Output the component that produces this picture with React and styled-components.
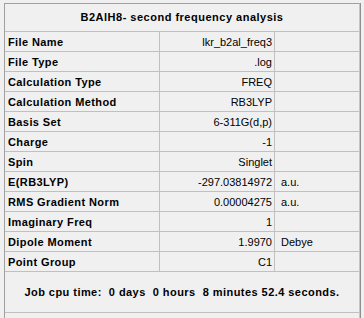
import React from 'react';
import styled, { createGlobalStyle } from 'styled-components';

const GlobalStyle = createGlobalStyle`
	html, body {
		margin: 0;
		padding: 0;
		background: #f0f0f0;
		overflow: hidden;
	}
	body {
		font-family: "Liberation Sans", Arial, sans-serif;
		font-size: 11px;
		color: #000;
	}
`;

const Page = styled.div`
	padding: 3px 0 0 4px;
	height: 318px;
	box-sizing: border-box;
	overflow: hidden;
`;

const Grid = styled.div`
	width: 354px;
	border-left: 1px solid #a0a0a0;
	border-top: 1px solid #a0a0a0;
	border-right: 1px solid #c4c4c4;
	box-shadow: 1px 0 0 #8f8f8f;
	height: 330px;
`;

const Title = styled.div`
	height: 28px;
	box-sizing: border-box;
	border-bottom: 1px solid #c0c0c0;
	display: flex;
	align-items: center;
	justify-content: center;
	font-weight: bold;
	letter-spacing: 0.5px;
	padding-bottom: 1px;
`;

const Row = styled.div`
	display: grid;
	grid-template-columns: 155px 115px 1fr;
	height: 20px;
	box-sizing: border-box;
	border-bottom: 1px solid #c0c0c0;
`;

const Cell = styled.div`
	display: flex;
	align-items: center;
	white-space: nowrap;
	overflow: hidden;
	box-sizing: border-box;
	border-right: ${p => (p.$last ? 'none' : '1px solid #c0c0c0')};
	justify-content: ${p => (p.$right ? 'flex-end' : 'flex-start')};
	padding: ${p => (p.$right ? '0 2px 0 0' : p.$unit ? '0 0 0 6px' : '0 0 0 3px')};
	font-weight: ${p => (p.$bold ? 'bold' : 'normal')};
	letter-spacing: ${p => (p.$bold ? '0.4px' : 'normal')};
`;

const Footer = styled.div`
	height: 41px;
	box-sizing: border-box;
	border-bottom: 1px solid #c0c0c0;
	display: flex;
	align-items: center;
	justify-content: center;
	font-weight: bold;
	letter-spacing: 0.45px;
	white-space: pre;
`;

const rows = [
	['File Name', 'lkr_b2al_freq3', ''],
	['File Type', '.log', ''],
	['Calculation Type', 'FREQ', ''],
	['Calculation Method', 'RB3LYP', ''],
	['Basis Set', '6-311G(d,p)', ''],
	['Charge', '-1', ''],
	['Spin', 'Singlet', ''],
	['E(RB3LYP)', '-297.03814972', 'a.u.'],
	['RMS Gradient Norm', '0.00004275', 'a.u.'],
	['Imaginary Freq', '1', ''],
	['Dipole Moment', '1.9970', 'Debye'],
	['Point Group', 'C1', ''],
];

export default function App() {
	return (
		<Page>
			<GlobalStyle />
			<Grid>
				<Title>B2AlH8- second frequency analysis</Title>
				{rows.map(([label, value, unit]) => (
					<Row key={label}>
						<Cell $bold>{label}</Cell>
						<Cell $right>{value}</Cell>
						<Cell $unit $last>{unit}</Cell>
					</Row>
				))}
				<Footer>{'Job cpu time:  0 days  0 hours  8 minutes 52.4 seconds.'}</Footer>
			</Grid>
		</Page>
	);
}
